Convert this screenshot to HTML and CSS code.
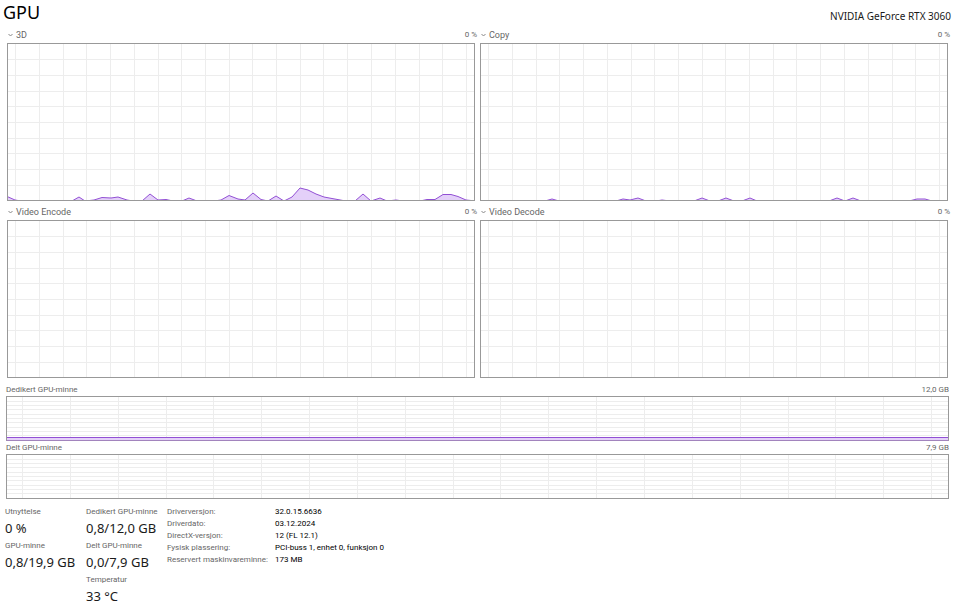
FILE: index.html
```html
<!DOCTYPE html>
<html lang="nb">
<head>
<meta charset="utf-8">
<title>GPU</title>
<link rel="stylesheet" href="styles.css">
</head>
<body>
<svg class="defs" aria-hidden="true">
  <defs>
    <path id="grid" class="grid" d="M7.5 0V156M31.5 0V156M55.5 0V156M78.5 0V156M102.5 0V156M126.5 0V156M150.5 0V156M173.5 0V156M197.5 0V156M221.5 0V156M244.5 0V156M268.5 0V156M292.5 0V156M315.5 0V156M339.5 0V156M363.5 0V156M387.5 0V156M411.5 0V156M434.5 0V156M458.5 0V156M0 15.5H466M0 31.5H466M0 47.5H466M0 62.5H466M0 78.5H466M0 94.5H466M0 109.5H466M0 125.5H466M0 141.5H466"/>
    <path id="memory-grid" class="grid" d="M15.5 0V43M63.5 0V43M111.5 0V43M159.5 0V43M206.5 0V43M254.5 0V43M302.5 0V43M350.5 0V43M398.5 0V43M446.5 0V43M494.5 0V43M542.5 0V43M590.5 0V43M638.5 0V43M686.5 0V43M734.5 0V43M782.5 0V43M829.5 0V43M877.5 0V43M925.5 0V43M0 4.5H942M0 8.5H942M0 12.5H942M0 17.5H942M0 21.5H942M0 25.5H942M0 30.5H942M0 34.5H942M0 38.5H942"/>
  </defs>
</svg>
<main class="panel">
  <header class="header">
    <h1 class="title">GPU</h1>
    <span class="device">NVIDIA GeForce RTX 3060</span>
  </header>

  <div class="engines">
    <section class="engine">
      <div class="caption">
        <button class="picker" type="button"><svg class="chevron" viewBox="0 0 5 4" aria-hidden="true"><path d="M0.500 1L2.500 3L4.500 1"/></svg>3D</button>
        <span class="percent">0 %</span>
      </div>
      <svg class="chart" viewBox="0 0 466 156" preserveAspectRatio="none" role="img" aria-label="3D">
        <use href="#grid"/>
        <path class="usage" d="M-2 158V152L7 156L13 157H64L71 153L77 157L86 156L94 153.500L103 154L110 153L119 156L125 157H134L142 150L150 156L158 155.500L165 157H174L181 154L189 157H206L213 156L221 151.500L230 155L237 156L245 149L253 155.500L260 157L268 152L276 157L284 153L292 144L300 146L308 150L316 153L324 154.500L335 156.500L347 157L355 150L363 157L372 154L379 157L388 156L395 157H412L419 155.500H427L435 150.500H443L450 152.500L458 156L468 157V158Z"/>
      </svg>
    </section>
    <section class="engine">
      <div class="caption">
        <button class="picker" type="button"><svg class="chevron" viewBox="0 0 5 4" aria-hidden="true"><path d="M0.500 1L2.500 3L4.500 1"/></svg>Copy</button>
        <span class="percent">0 %</span>
      </div>
      <svg class="chart" viewBox="0 0 466 156" preserveAspectRatio="none" role="img" aria-label="Copy">
        <use href="#grid"/>
        <path class="usage" d="M-2 158V157H64L71 155L78 157H135L142 155L149 156L157 154L165 157H175L181 156L189 157H213L221 154L229 157H237L245 154L253 157H261L269 154L276 157H348L356 154L364 157L372 154L380 157H428L436 155H444L451 157H468V158Z"/>
      </svg>
    </section>
    <section class="engine">
      <div class="caption">
        <button class="picker" type="button"><svg class="chevron" viewBox="0 0 5 4" aria-hidden="true"><path d="M0.500 1L2.500 3L4.500 1"/></svg>Video Encode</button>
        <span class="percent">0 %</span>
      </div>
      <svg class="chart" viewBox="0 0 466 156" preserveAspectRatio="none" role="img" aria-label="Video Encode"><use href="#grid"/></svg>
    </section>
    <section class="engine">
      <div class="caption">
        <button class="picker" type="button"><svg class="chevron" viewBox="0 0 5 4" aria-hidden="true"><path d="M0.500 1L2.500 3L4.500 1"/></svg>Video Decode</button>
        <span class="percent">0 %</span>
      </div>
      <svg class="chart" viewBox="0 0 466 156" preserveAspectRatio="none" role="img" aria-label="Video Decode"><use href="#grid"/></svg>
    </section>
  </div>

  <div class="memories">
    <section class="memory">
      <div class="memory-caption"><span>Dedikert GPU-minne</span><span>12,0 GB</span></div>
      <svg class="memory-chart in-use" viewBox="0 0 942 43" preserveAspectRatio="none" role="img" aria-label="Dedikert GPU-minne">
        <use href="#memory-grid"/>
        <path class="usage" d="M-2 45V40.500H944V45Z"/>
      </svg>
    </section>
    <section class="memory">
      <div class="memory-caption"><span>Delt GPU-minne</span><span>7,9 GB</span></div>
      <svg class="memory-chart" viewBox="0 0 942 43" preserveAspectRatio="none" role="img" aria-label="Delt GPU-minne"><use href="#memory-grid"/></svg>
    </section>
  </div>

  <footer class="summary">
    <dl class="stats">
      <div class="stat"><dt>Utnyttelse</dt><dd>0 %</dd></div>
      <div class="stat"><dt>GPU-minne</dt><dd>0,8/19,9 GB</dd></div>
    </dl>
    <dl class="stats">
      <div class="stat"><dt>Dedikert GPU-minne</dt><dd>0,8/12,0 GB</dd></div>
      <div class="stat"><dt>Delt GPU-minne</dt><dd>0,0/7,9 GB</dd></div>
      <div class="stat"><dt>Temperatur</dt><dd>33 °C</dd></div>
    </dl>
    <dl class="details">
      <dt>Driverversjon:</dt><dd>32.0.15.6636</dd>
      <dt>Driverdato:</dt><dd>03.12.2024</dd>
      <dt>DirectX-versjon:</dt><dd>12 (FL 12.1)</dd>
      <dt>Fysisk plassering:</dt><dd>PCI-buss 1, enhet 0, funksjon 0</dd>
      <dt>Reservert maskinvareminne:</dt><dd>173 MB</dd>
    </dl>
  </footer>
</main>
</body>
</html>
```
FILE: styles.css
```css
* {
  box-sizing: border-box;
}

body {
  margin: 0;
  background: #fff;
  color: #1a1a1a;
  font: 8px/12px Roboto, "Noto Sans", sans-serif;
}

.defs {
  position: absolute;
  width: 0;
  height: 0;
}

.title,
.device,
.stat dd {
  font-family: "Noto Sans", sans-serif;
}

.header {
  display: flex;
  justify-content: space-between;
  align-items: flex-end;
  height: 28px;
  padding: 0 9px 4px 3px;
}

.title {
  margin: 0;
  color: #000;
  font-size: 18px;
  font-weight: 400;
  line-height: 24px;
}

.device {
  font-size: 10px;
  line-height: 16px;
}

.engines {
  display: grid;
  grid-template-columns: 1fr 1fr;
  column-gap: 5px;
  row-gap: 4px;
  padding: 0 12px 0 7px;
}

.caption,
.memory-caption {
  display: flex;
  justify-content: space-between;
  color: #666;
}

.caption {
  height: 15px;
  margin-right: -2px;
  padding-left: 1px;
}

.picker {
  display: flex;
  align-items: center;
  gap: 3px;
  height: 13px;
  padding: 0;
  border: 0;
  background: none;
  color: inherit;
  font: inherit;
  font-size: 9px;
}

.percent {
  line-height: 13px;
}

.chevron {
  width: 5px;
  height: 4px;
  fill: none;
  stroke: #888;
}

.chart,
.memory-chart {
  display: block;
  width: 100%;
  border: 1px solid #999;
}

.chart {
  height: 158px;
}

.memory-chart {
  height: 45px;
}

.memory-chart.in-use {
  border-bottom-color: #a284bd;
}

.grid {
  fill: none;
  stroke: #ededed;
  vector-effect: non-scaling-stroke;
  shape-rendering: crispEdges;
}

.usage {
  fill: #e4d0f9;
  stroke: #9250d4;
  vector-effect: non-scaling-stroke;
}

.memories {
  padding: 5px 11px 0 6px;
}

.memory-caption {
  height: 13px;
  line-height: 13px;
}

.summary {
  display: flex;
  padding: 7px 5px 0;
}

.stats,
.details {
  margin: 0;
}

.stats {
  flex: none;
  width: 81px;
  white-space: nowrap;
}

.stat {
  height: 34px;
}

dt {
  color: #666;
}

dd {
  margin: 0;
}

.stat dd {
  font-size: 13px;
  line-height: 20px;
}

.details {
  display: grid;
  grid-template-columns: 108px auto;
  align-content: start;
}

.details dd {
  color: #000;
}
```
